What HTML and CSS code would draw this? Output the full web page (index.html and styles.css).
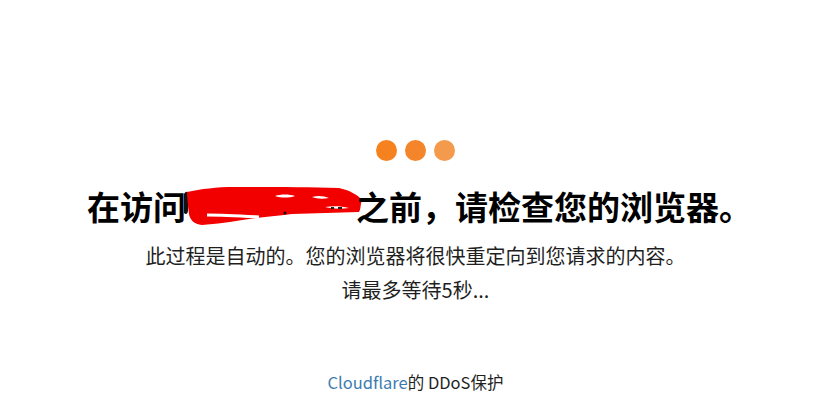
FILE: index.html
```html
<!DOCTYPE html>
<html lang="zh-CN">
<head>
<meta charset="utf-8">
<title>请稍候…</title>
<link rel="stylesheet" href="styles.css">
</head>
<body>
<main class="page">
  <div class="dots">
    <span class="dot d1"></span>
    <span class="dot d2"></span>
    <span class="dot d3"></span>
  </div>
  <h1 class="title">在访问<span class="redact"><svg viewBox="0 0 176 40" width="176" height="40" aria-hidden="true"><path d="M-2 8 C0 4 4 6 3 10 L2 24 C2 28 0 29 -2 27 Z" fill="#111"/><path d="M1 6 C15 3 30 1 49 1 C80 1 120 1 153 2 C163 4 172 9 176 14 C174 20 175 23 173 26 C150 27 128 27 106 28 C90 30 76 31 63 33 C45 36 30 38 16 39 C8 38 4 34 3 28 C2 20 1 12 1 6 Z" fill="#f20000"/><path d="M21 29 C38 29 55 30 73 31" stroke="#fff" stroke-width="3" fill="none"/><path d="M89 10 C95 8 103 8 109 10 C103 12 95 12 89 10 Z" fill="#fff"/><path d="M126 11 C132 9 138 10 143 12 C137 13 131 13 126 11 Z" fill="#fff"/><path d="M139 21 C147 20 155 20 163 22 C155 23 147 23 139 21 Z" fill="#fff"/><rect x="145" y="21" width="3" height="2" fill="#222"/><rect x="152" y="21" width="4" height="2" fill="#222"/><circle cx="99" cy="27" r="1.5" fill="#111"/></svg></span>之前，请检查您的浏览器。</h1>
  <p class="msg">此过程是自动的。您的浏览器将很快重定向到您请求的内容。</p>
  <p class="msg">请最多等待5秒...</p>
  <footer class="foot"><a class="cf" href="#">Cloudflare</a>的 DDoS保护</footer>
</main>
</body>
</html>
```
FILE: styles.css
```css
html, body {
  margin: 0;
  padding: 0;
  background: #fff;
}
body {
  font-family: "Noto Sans CJK SC", "Noto Sans", sans-serif;
  color: #1f1f1f;
}
.page {
  width: 825px;
  height: 402px;
  display: flex;
  flex-direction: column;
  align-items: center;
  padding: 140px 0 0 6px;
  box-sizing: border-box;
}
.dots {
  display: flex;
  gap: 8px;
  height: 20px;
}
.dot {
  width: 21px;
  height: 21px;
  border-radius: 50%;
  background: #f5821f;
}
.d2 { background: #f4852a; }
.d3 { background: #f49a4c; }
.title {
  margin: 26px 0 0 8px;
  font-size: 33px;
  line-height: 40px;
  font-weight: 700;
  color: #000;
  display: flex;
  align-items: center;
  white-space: nowrap;
}
.redact {
  display: inline-block;
  width: 170px;
  height: 40px;
}
.redact svg { display: block; overflow: visible; }
.msg {
  margin: 0;
  font-size: 20px;
  line-height: 34px;
  color: #1f1f1f;
}
.title + .msg { margin-top: 13px; }
.foot {
  margin-top: auto;
  margin-bottom: 8px;
  font-size: 16.5px;
  line-height: 24px;
  color: #1f1f1f;
}
.cf {
  color: #3d7cb0;
  text-decoration: none;
}
```
